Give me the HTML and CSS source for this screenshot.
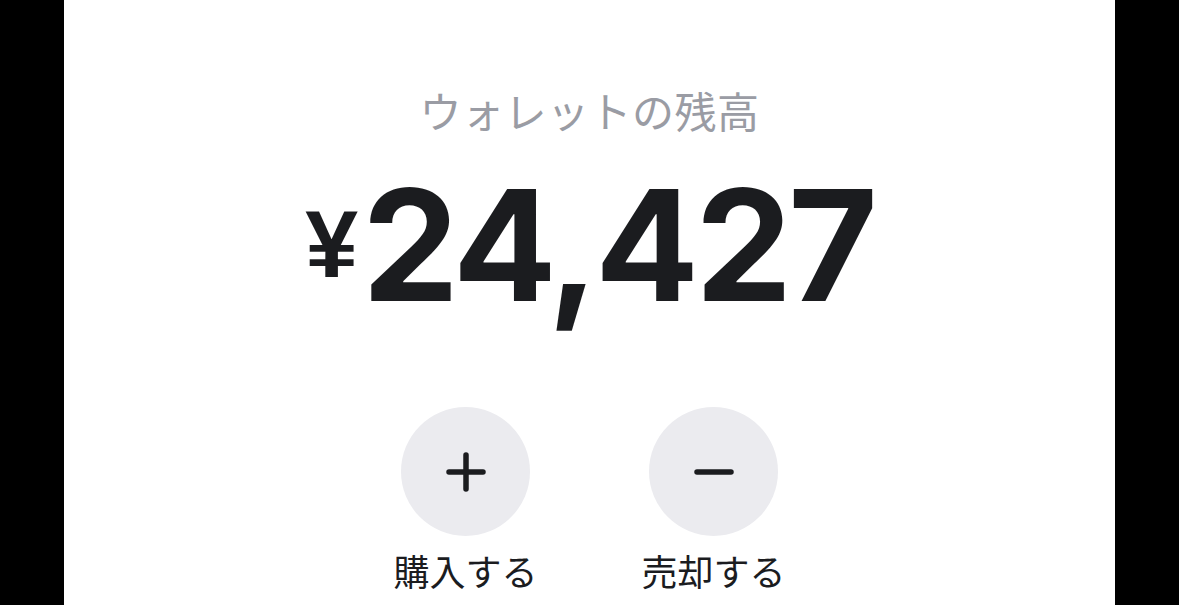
FILE: index.html
```html
<!DOCTYPE html>
<html lang="ja">
<head>
<meta charset="utf-8">
<link rel="stylesheet" href="styles.css">
</head>
<body>
<main class="screen">
  <div class="title">ウォレットの残高</div>
  <div class="balance"><span class="yen">¥</span><span class="amount">24,427</span></div>
  <div class="actions">
    <div class="action">
      <div class="circle">
        <svg width="40" height="40" viewBox="0 0 40 40"><path d="M20 3V37M3 20H37" stroke="#1b1c1f" stroke-width="5.5" stroke-linecap="round" fill="none"/></svg>
      </div>
      <div class="label">購入する</div>
    </div>
    <div class="action">
      <div class="circle">
        <svg width="40" height="40" viewBox="0 0 40 40"><path d="M3 20H37" stroke="#1b1c1f" stroke-width="5.5" stroke-linecap="round" fill="none"/></svg>
      </div>
      <div class="label">売却する</div>
    </div>
  </div>
</main>
</body>
</html>
```
FILE: styles.css
```css
html, body {
  margin: 0;
  padding: 0;
  background: #000;
  height: 605px;
  overflow: hidden;
}
.screen {
  margin-left: 64px;
  width: 1051px;
  height: 605px;
  background: #fff;
  display: flex;
  flex-direction: column;
  align-items: center;
  font-family: "Noto Sans CJK JP", "Noto Sans", sans-serif;
}
.title {
  margin-top: 80px;
  font-size: 42px;
  line-height: 60px;
  color: #9a9ca4;
  letter-spacing: 0.5px;
}
.balance {
  margin-top: 30px;
  display: flex;
  align-items: flex-start;
  color: #1b1c1f;
  font-weight: 700;
  height: 148px;
}
.yen {
  font-family: "Liberation Sans", Arial, sans-serif;
  font-size: 95px;
  line-height: 95px;
  margin-top: 27px;
  margin-right: 4px;
}
.amount {
  font-family: Inter, "Liberation Sans", sans-serif;
  font-size: 154px;
  line-height: 150px;
  letter-spacing: -4px;
}
.actions {
  margin-top: 89px;
  display: flex;
  gap: 119px;
}
.action {
  display: flex;
  flex-direction: column;
  align-items: center;
  width: 129px;
}
.circle {
  width: 129px;
  height: 129px;
  border-radius: 50%;
  background: #ebebef;
  display: flex;
  align-items: center;
  justify-content: center;
}
.label {
  margin-top: 12px;
  font-size: 36px;
  line-height: 44px;
  color: #1b1c1f;
  white-space: nowrap;
}
```
